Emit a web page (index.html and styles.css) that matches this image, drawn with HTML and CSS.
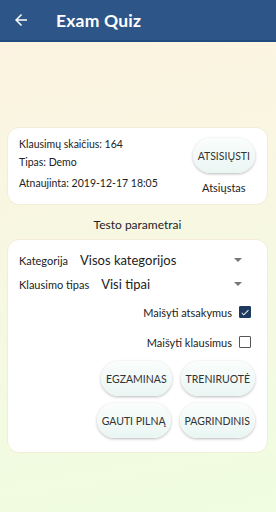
FILE: index.html
```html
<!DOCTYPE html>
<html lang="lt">
<head>
    <meta charset="UTF-8">
    <meta name="viewport" content="width=device-width, initial-scale=1.0">
    <title>Exam Quiz</title>
    <link rel="stylesheet" href="styles.css">
</head>
<body>
    <div class="app-bar">
        <svg class="back" width="18" height="18" viewBox="0 0 24 24">
            <path d="M20 11H7.83l5.59-5.59L12 4l-8 8 8 8 1.41-1.41L7.83 13H20v-2z" fill="#fff"/>
        </svg>
        <span class="app-title">Exam Quiz</span>
    </div>

    <div class="content">
        <div class="card info-card">
            <div class="info-lines">
                <div>Klausimų skaičius: 164</div>
                <div class="line-2">Tipas: Demo</div>
                <div class="line-3">Atnaujinta: 2019-12-17 18:05</div>
            </div>
            <div class="download">
                <button class="pill">ATSISIŲSTI</button>
                <div class="status">Atsiųstas</div>
            </div>
        </div>

        <div class="section-title">Testo parametrai</div>

        <div class="card params-card">
            <div class="select-row">
                <span class="select-label">Kategorija</span>
                <span class="select-value">Visos kategorijos</span>
                <span class="caret"></span>
            </div>
            <div class="select-row">
                <span class="select-label">Klausimo tipas</span>
                <span class="select-value">Visi tipai</span>
                <span class="caret"></span>
            </div>
            <div class="check-row check-first">
                <span>Maišyti atsakymus</span>
                <span class="box checked">
                    <svg width="11" height="11" viewBox="0 0 24 24"><path d="M9 16.2 4.8 12l-1.4 1.4L9 19 21 7l-1.4-1.4z" fill="#fff"/></svg>
                </span>
            </div>
            <div class="check-row">
                <span>Maišyti klausimus</span>
                <span class="box"></span>
            </div>
            <div class="btn-grid">
                <div class="btn-row">
                    <button class="pill">EGZAMINAS</button>
                    <button class="pill">TRENIRUOTĖ</button>
                </div>
                <div class="btn-row">
                    <button class="pill">GAUTI PILNĄ</button>
                    <button class="pill">PAGRINDINIS</button>
                </div>
            </div>
        </div>
    </div>
</body>
</html>
```

FILE: styles.css
```css
html, body {
    height: 100%;
}
body {
    margin: 0;
    font-family: Lato, "Noto Sans", sans-serif;
    color: #222;
    background: linear-gradient(170deg, #fdf3e1 0%, #f7f8e2 50%, #effde0 100%);
}
.app-bar {
    height: 40px;
    background-color: #2d5588;
    border-bottom: 2px solid #204b7e;
    display: flex;
    align-items: center;
}
.back {
    margin-left: 12px;
}
.app-title {
    margin-left: 26px;
    color: #fff;
    font-size: 17.5px;
    font-weight: 700;
    letter-spacing: 0.2px;
}
.content {
    padding: 85px 8px 0 7px;
}
.card {
    background-color: #fff;
    border-radius: 12px;
    border: 1px solid #f3ecd6;
}
.info-card {
    height: 76px;
    display: flex;
    justify-content: space-between;
    align-items: flex-start;
    padding: 0 12px 0 11px;
}
.info-lines {
    font-size: 10.5px;
    line-height: 14px;
    padding-top: 9px;
}
.line-2 {
    margin-top: 4px;
}
.line-3 {
    margin-top: 7px;
}
.download {
    display: flex;
    flex-direction: column;
    align-items: center;
    gap: 8px;
    padding-top: 10px;
}
.pill {
    font-family: inherit;
    font-size: 10.5px;
    color: #333;
    border: none;
    border-radius: 18px;
    height: 35px;
    padding: 0 5px;
    background: linear-gradient(180deg, #fafdfc 0%, #eaf6f3 100%);
    box-shadow: 0 1px 3px rgba(0, 0, 0, 0.28);
}
.status {
    font-size: 11px;
    line-height: 14px;
}
.section-title {
    text-align: center;
    font-size: 12px;
    margin: 12px 0 7px;
}
.params-card {
    height: 212px;
    padding: 0 11px;
}
.select-row {
    display: flex;
    align-items: center;
    height: 24px;
}
.select-row:first-child {
    margin-top: 8px;
}
.select-label {
    font-size: 11px;
    margin-right: 12px;
}
.select-value {
    font-size: 13px;
    flex: 1;
}
.caret {
    width: 0;
    height: 0;
    border-left: 4px solid transparent;
    border-right: 4px solid transparent;
    border-top: 4px solid #777;
    margin-right: 14px;
}
.check-row {
    display: flex;
    justify-content: flex-end;
    align-items: center;
    gap: 7px;
    font-size: 11px;
    height: 30px;
    padding-right: 5px;
}
.check-first {
    margin-top: 1px;
}
.box {
    width: 10px;
    height: 10px;
    border: 1.5px solid #555;
    border-radius: 1px;
    display: flex;
    align-items: center;
    justify-content: center;
}
.box.checked {
    background-color: #1e3a5f;
    border-color: #1e3a5f;
}
.btn-grid {
    display: flex;
    flex-direction: column;
    gap: 7px;
    margin-top: 4px;
}
.btn-row {
    display: flex;
    justify-content: flex-end;
    gap: 9px;
    padding-right: 1px;
}
```
